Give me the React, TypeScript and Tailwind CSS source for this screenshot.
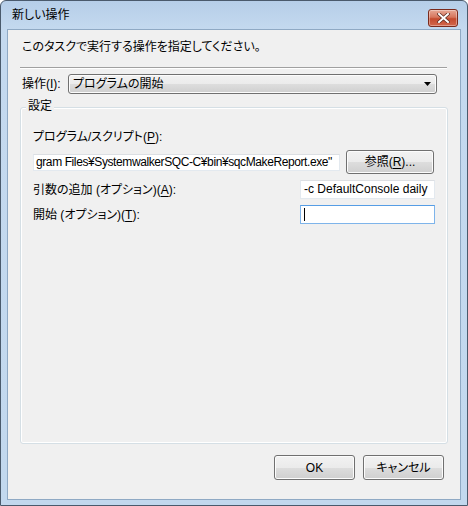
import React from "react";

const btn =
  "rounded-[3px] border border-[#707070] bg-[linear-gradient(to_bottom,#f2f2f2_0%,#ebebeb_50%,#dddddd_51%,#cfcfcf_100%)] shadow-[inset_0_0_0_1px_#fcfcfc] flex items-center justify-center text-[12px] leading-[14px] text-black";

function U({ c }: { c: string }) {
  return <span className="underline underline-offset-2">{c}</span>;
}

export default function App() {
  return (
    <div className="w-[468px] h-[506px] font-['Liberation_Sans','Noto_Sans_CJK_JP',sans-serif] text-black [font-feature-settings:'palt']">
      <div className="w-full h-full rounded-t-[6px] border border-[#4a5a6c] bg-[linear-gradient(to_bottom,#b6cee8_0px,#c4d9ef_28px,#c2d8ee_100%)] flex flex-col">
        {/* Title bar */}
        <div className="h-[28px] flex items-start justify-between pl-[11px] pr-[9px]">
          <span className="mt-[7px] text-[12px] leading-[14px]">新しい操作</span>
          <div className="mt-[8px] w-[30px] h-[18px] rounded-[3px] border border-[#7a2a1c] bg-[linear-gradient(to_bottom,#e7a895_0%,#d7765d_45%,#c44a2e_55%,#d2674c_100%)] shadow-[inset_0_0_0_1px_rgba(255,255,255,0.35)] flex items-center justify-center">
            <svg width="13" height="10" viewBox="0 0 13 10">
              <path d="M2 1 L11 9 M11 1 L2 9" stroke="#5a2a20" strokeWidth="3.4" strokeLinecap="square" />
              <path d="M2 1 L11 9 M11 1 L2 9" stroke="#ffffff" strokeWidth="2" strokeLinecap="square" />
            </svg>
          </div>
        </div>

        {/* Client area */}
        <div className="mx-[6px] mb-[5px] flex-1 border border-[#8fa9c4] bg-[#f0f0f0] flex flex-col text-[12px]">
          <div className="pl-[14px] pt-[10px] leading-[14px]">このタスクで実行する操作を指定してください。</div>
          <div className="mt-[13px] ml-[12px] mr-[13px] h-[2px] border-t border-[#a0a0a0] border-b border-b-white" />

          <div className="mt-[5px] ml-[14px] flex items-center">
            <span className="w-[46px] leading-[14px]">
              操作(<U c="I" />):
            </span>
            <div className="w-[369px] h-[20px] rounded-[3px] border border-[#707070] bg-[linear-gradient(to_bottom,#f2f2f2_0%,#ebebeb_50%,#dddddd_51%,#cfcfcf_100%)] shadow-[inset_0_0_0_1px_#fcfcfc] flex items-center justify-between pl-[4px] pr-[5px]">
              <span className="leading-[14px]">プログラムの開始</span>
              <svg width="7" height="4" viewBox="0 0 7 4">
                <path d="M0 0 H7 L3.5 4 Z" fill="#000" />
              </svg>
            </div>
          </div>

          {/* Group box */}
          <div className="relative mt-[13px] ml-[12px] w-[428px] h-[337px] rounded-[3px] border border-[#d5dfe5] shadow-[inset_0_0_0_1px_#ffffff]">
            <span className="absolute left-[5px] top-[-9px] px-[2px] bg-[#f0f0f0] leading-[14px]">設定</span>
            <div className="pt-[22px] pl-[12px] leading-[14px]">
              プログラム/スクリプト(<U c="P" />):
            </div>
            <div className="mt-[6px] ml-[12px] flex items-center">
              <div className="w-[307px] h-[17px] border border-[#e3e9ef] border-t-[#dcdfe3] bg-white overflow-hidden whitespace-nowrap pl-[2px] leading-[15px] tracking-[-0.4px]">
                gram Files¥SystemwalkerSQC-C¥bin¥sqcMakeReport.exe"
              </div>
              <div className={`${btn} ml-[6px] w-[88px] h-[24px]`}>
                参照(<U c="R" />)...
              </div>
            </div>

            <div className="mt-[6px] ml-[12px] mr-[12px] flex items-center justify-between">
              <span className="leading-[14px]">
                引数の追加 (オプション)(<U c="A" />):
              </span>
              <div className="w-[135px] h-[19px] border border-[#e3e9ef] border-t-[#dcdfe3] bg-white whitespace-nowrap overflow-hidden pl-[3px] leading-[17px]">
                -c DefaultConsole daily
              </div>
            </div>

            <div className="mt-[6px] ml-[12px] mr-[12px] flex items-center justify-between">
              <span className="leading-[14px]">
                開始 (オプション)(<U c="T" />):
              </span>
              <div className="w-[135px] h-[19px] border border-[#7eb4ea] border-t-[#569de5] bg-white flex items-center pl-[3px]">
                <div className="w-[1px] h-[13px] bg-black" />
              </div>
            </div>
          </div>

          <div className="mt-[11px] mr-[16px] flex justify-end gap-[8px]">
            <div className={`${btn} w-[81px] h-[25px] border-[#3c7fb1] shadow-[inset_0_0_0_1px_#48d6f0]`}>OK</div>
            <div className={`${btn} w-[81px] h-[25px]`}>キャンセル</div>
          </div>
        </div>
      </div>
    </div>
  );
}
